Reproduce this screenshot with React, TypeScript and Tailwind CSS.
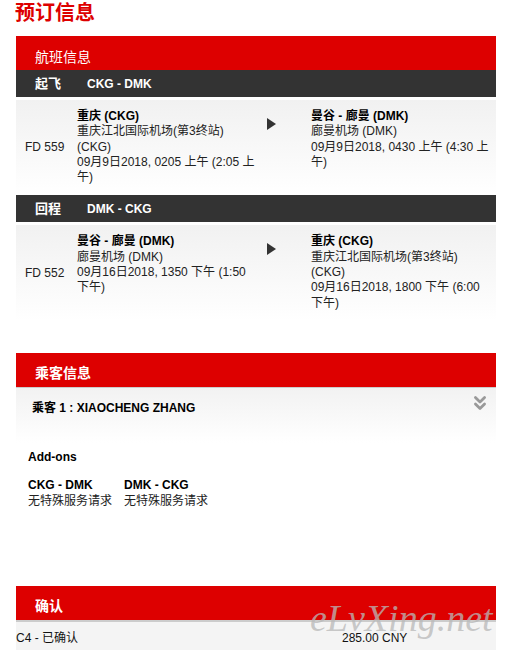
import { ChevronsDown } from "lucide-react"

interface Stop {
  city: string
  airport: string
  time: string
}

interface Leg {
  label: string
  route: string
  flight: string
  from: Stop
  to: Stop
}

const LEGS: Leg[] = [
  {
    label: "起飞",
    route: "CKG - DMK",
    flight: "FD 559",
    from: {
      city: "重庆 (CKG)",
      airport: "重庆江北国际机场(第3终站) (CKG)",
      time: "09月9日2018, 0205 上午 (2:05 上午)",
    },
    to: {
      city: "曼谷 - 廊曼 (DMK)",
      airport: "廊曼机场 (DMK)",
      time: "09月9日2018, 0430 上午 (4:30 上午)",
    },
  },
  {
    label: "回程",
    route: "DMK - CKG",
    flight: "FD 552",
    from: {
      city: "曼谷 - 廊曼 (DMK)",
      airport: "廊曼机场 (DMK)",
      time: "09月16日2018, 1350 下午 (1:50 下午)",
    },
    to: {
      city: "重庆 (CKG)",
      airport: "重庆江北国际机场(第3终站) (CKG)",
      time: "09月16日2018, 1800 下午 (6:00 下午)",
    },
  },
]

function SectionHeader({ title, bold }: { title: string; bold?: boolean }) {
  return (
    <div className="h-[34px] bg-[#dd0000] pl-[19px] pt-[7px] flex items-center">
      <span className={`text-[14px] leading-[16px] text-white ${bold ? "font-bold" : ""}`}>{title}</span>
    </div>
  )
}

function StopCell({ stop }: { stop: Stop }) {
  return (
    <div className="leading-[15.3px]">
      <div className="font-bold text-black">{stop.city}</div>
      <div className="text-[#222]">{stop.airport}</div>
      <div className="text-[#222]">{stop.time}</div>
    </div>
  )
}

function LegBlock({ leg }: { leg: Leg }) {
  return (
    <div>
      <div className="h-[27px] bg-[#333333] pl-[19px] flex items-center text-white font-bold">
        <span className="w-[52px] text-[13px]">{leg.label}</span>
        <span className="text-[12px]">{leg.route}</span>
      </div>
      <div className="mt-[3px] bg-gradient-to-b from-[#f1f1f1] to-white pl-[9px] pt-[9px] pb-[10px] grid grid-cols-[52px_180px_54px_180px] items-start">
        <div className="self-center text-[#222]">{leg.flight}</div>
        <StopCell stop={leg.from} />
        <div className="pt-[9px] pl-[10px]">
          <div className="w-0 h-0 border-l-[9px] border-l-[#333] border-y-[6px] border-y-transparent" />
        </div>
        <StopCell stop={leg.to} />
      </div>
    </div>
  )
}

export default function App() {
  return (
    <div className="w-[514px] min-h-[658px] bg-white text-[12px] text-black font-['Liberation_Sans','Noto_Sans_CJK_SC',sans-serif] overflow-hidden">
      <h1 className="pl-[15px] text-[20px] leading-[26px] font-bold text-[#dd0000]">预订信息</h1>

      <div className="mx-[16px] w-[480px] mt-[10px]">
        {/* flight info */}
        <SectionHeader title="航班信息" />
        {LEGS.map((leg) => (
          <LegBlock key={leg.flight} leg={leg} />
        ))}

        {/* passengers */}
        <div className="mt-[32px]">
          <SectionHeader title="乘客信息" bold />
          <div className="border-t border-[#cccccc] h-[56px] bg-gradient-to-b from-[#f2f2f2] to-white pl-[16px] pr-[5px] pt-[10px] flex justify-between items-start">
            <span className="font-bold leading-[15px] mt-[3px]">乘客 1 : XIAOCHENG ZHANG</span>
            <ChevronsDown size={22} strokeWidth={3} color="#999999" className="-mt-[6px]" />
          </div>
          <div className="pl-[12px] pt-[7px]">
            <div className="font-bold leading-[15px]">Add-ons</div>
            <div className="mt-[12px] flex gap-[12px] leading-[16.5px]">
              <div>
                <div className="font-bold">CKG - DMK</div>
                <div className="text-[#222]">无特殊服务请求</div>
              </div>
              <div>
                <div className="font-bold">DMK - CKG</div>
                <div className="text-[#222]">无特殊服务请求</div>
              </div>
            </div>
          </div>
        </div>

        {/* confirmation */}
        <div className="mt-[76px] relative">
          <SectionHeader title="确认" bold />
          <div className="border-t-2 border-[#cccccc] h-[30px] bg-[#f4f4f4] pt-[4px] grid grid-cols-[326px_auto] items-center text-[#111]">
            <span>C4 - 已确认</span>
            <span>285.00 CNY</span>
          </div>
          <span className="absolute left-[294px] top-[10px] text-[38px] leading-[44px] italic font-['Liberation_Serif',serif] text-[#b8b8b8]/75 pointer-events-none">
            eLvXing.net
          </span>
        </div>
      </div>
    </div>
  )
}
